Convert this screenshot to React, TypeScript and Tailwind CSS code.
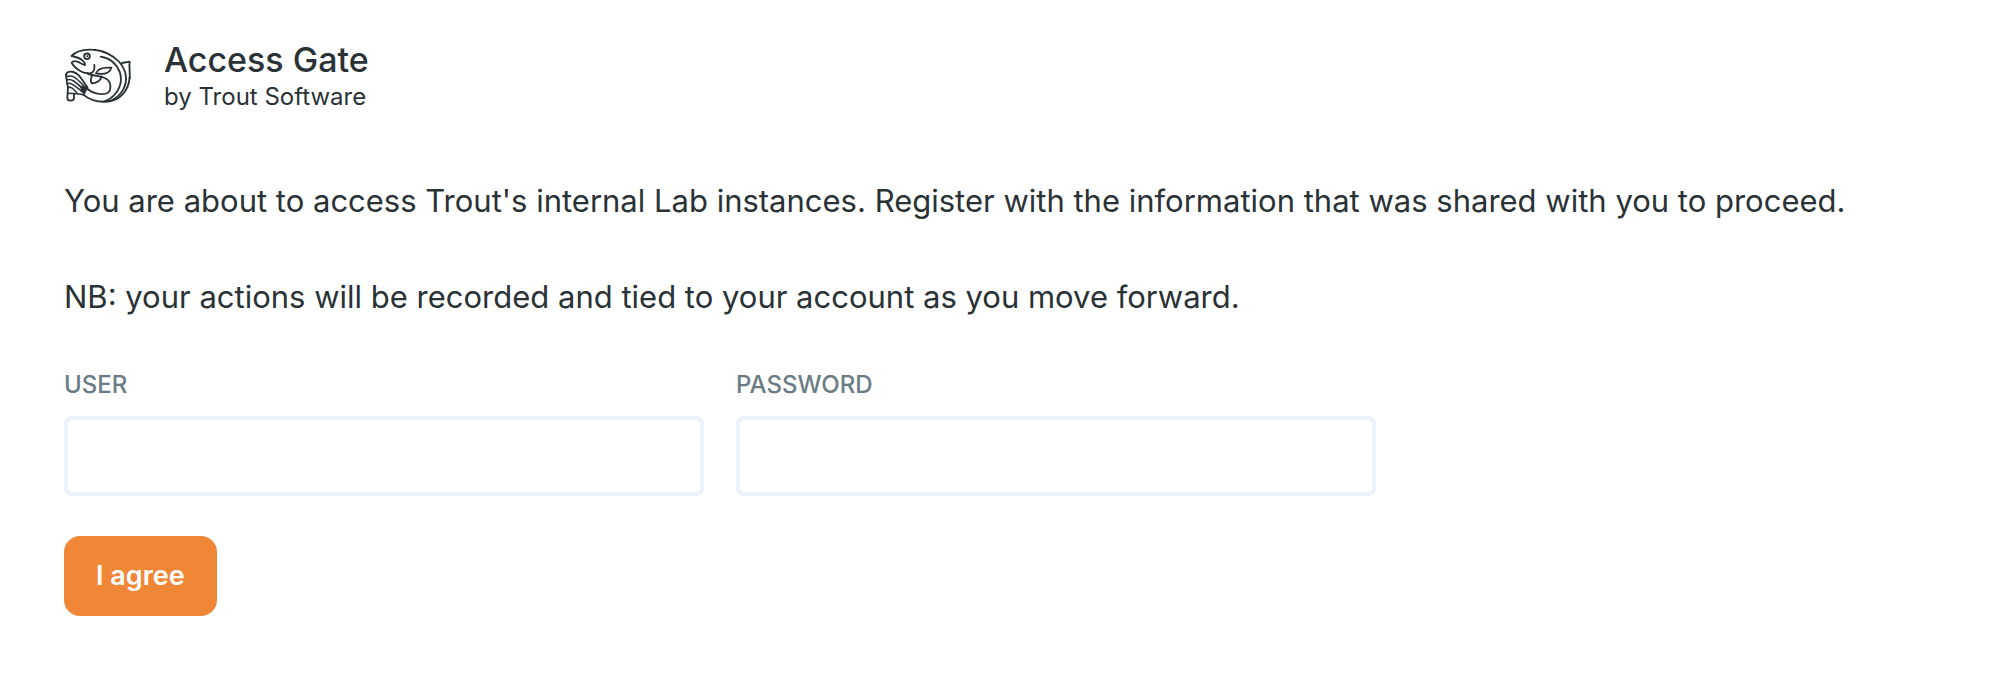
import { useState } from "react"
import type { FormEvent } from "react"

function TroutLogo() {
  return (
    <svg
      viewBox="42 48 204 174"
      className="mt-1.5 w-[68px] h-[58px] shrink-0"
      fill="none"
      stroke="currentColor"
      strokeWidth="5.5"
      strokeLinecap="round"
      strokeLinejoin="round"
      aria-hidden="true"
    >
      {/* head and back */}
      <path d="M65 78 C80 62 102 58 124 59 C158 59 190 76 208 96 C228 120 234 150 220 178 C210 196 196 208 176 214"/>
      <path d="M152 80 C180 84 200 102 210 128 C218 156 208 184 184 203 C178 208 170 212 162 214"/>
      {/* mouth */}
      <path d="M65 78 C78 81 90 84 97 91 C103 96 106 101 105 105 C96 104 90 97 82 95 C76 93 68 94 65 98 C68 106 76 113 86 120 C96 127 108 130 120 130 C132 128 135 118 133 105"/>
      {/* eye */}
      <circle cx="111" cy="79" r="8.5"/>
      <circle cx="112" cy="79" r="3" fill="currentColor" stroke="none"/>
      {/* fins */}
      <path d="M138 130 C142 118 156 111 184 113 C180 126 166 135 138 130 Z"/>
      <path d="M126 137 C122 145 122 154 125 160 C140 160 151 153 155 139"/>
      <path d="M216 99 L239 95 C236 112 241 130 239 146"/>
      {/* belly */}
      <path d="M112 130 C126 138 150 137 164 144 C180 150 184 166 180 180 C176 192 158 194 142 191 C126 188 114 180 106 170"/>
      <path d="M100 194 C116 208 142 217 172 215 C208 212 236 184 239 142"/>
      {/* tail */}
      <path d="M48 134 C50 126 60 124 70 126 C86 130 94 146 112 172"/>
      <path d="M48 134 L51 158 L54 172 L52 204 C52 210 56 212 62 212 C69 212 72 210 72 204 L72 192"/>
      <g strokeWidth="4.5">
        <path d="M49 140 C72 132 82 148 110 176"/>
        <path d="M50 150 C68 144 80 160 106 184"/>
        <path d="M51 161 C66 156 78 172 104 190"/>
        <path d="M53 172 C64 168 74 180 82 191 L100 194"/>
        <path d="M54 190 L82 191"/>
      </g>
      <path d="M92 166 L110 172 L102 192 L92 184 Z" fill="currentColor" stroke="none"/>
      <path d="M112 172 L100 194"/>
    </svg>
  )
}

interface FieldProps {
  id: string
  label: string
  type: string
  value: string
  onChange: (value: string) => void
}

function Field({ id, label, type, value, onChange }: FieldProps) {
  return (
    <div className="flex flex-col gap-[14px]">
      <label htmlFor={id} className="text-2xl leading-[34px] font-medium uppercase text-[#697c84]">
        {label}
      </label>
      <input
        id={id}
        type={type}
        value={value}
        onChange={e => onChange(e.target.value)}
        className="w-full h-20 px-6 text-[28px] rounded-lg border-4 border-[#ecf2f7] bg-white outline-none focus:border-[#cbd8e1]"
      />
    </div>
  )
}

export default function App() {
  const [user, setUser]         = useState('')
  const [password, setPassword] = useState('')

  const submit = (e: FormEvent) => {
    e.preventDefault()
  }

  return (
    <main className="min-h-screen bg-white px-16 py-10 font-['Inter',sans-serif] text-[#2a3236]">
      <header className="flex items-start gap-8">
        <TroutLogo/>
        <div>
          <h1 className="text-[34px] leading-10 font-medium">Access Gate</h1>
          <p className="text-2xl leading-[34px]">by Trout Software</p>
        </div>
      </header>

      <div className="mt-[62px] flex flex-col gap-[46px] text-[31px] leading-[50px]">
        <p>
          You are about to access Trout's internal Lab instances. Register with the information that was shared with you to proceed.
        </p>
        <p>NB: your actions will be recorded and tied to your account as you move forward.</p>
      </div>

      <form onSubmit={submit} className="mt-[46px]">
        <div className="grid grid-cols-2 gap-8 max-w-[1312px]">
          <Field id="user" label="User" type="text" value={user} onChange={setUser}/>
          <Field id="password" label="Password" type="password" value={password} onChange={setPassword}/>
        </div>
        <button
          type="submit"
          className="mt-10 h-20 px-8 rounded-2xl bg-[#ef8737] text-[27px] font-semibold text-white"
        >
          I agree
        </button>
      </form>
    </main>
  )
}
